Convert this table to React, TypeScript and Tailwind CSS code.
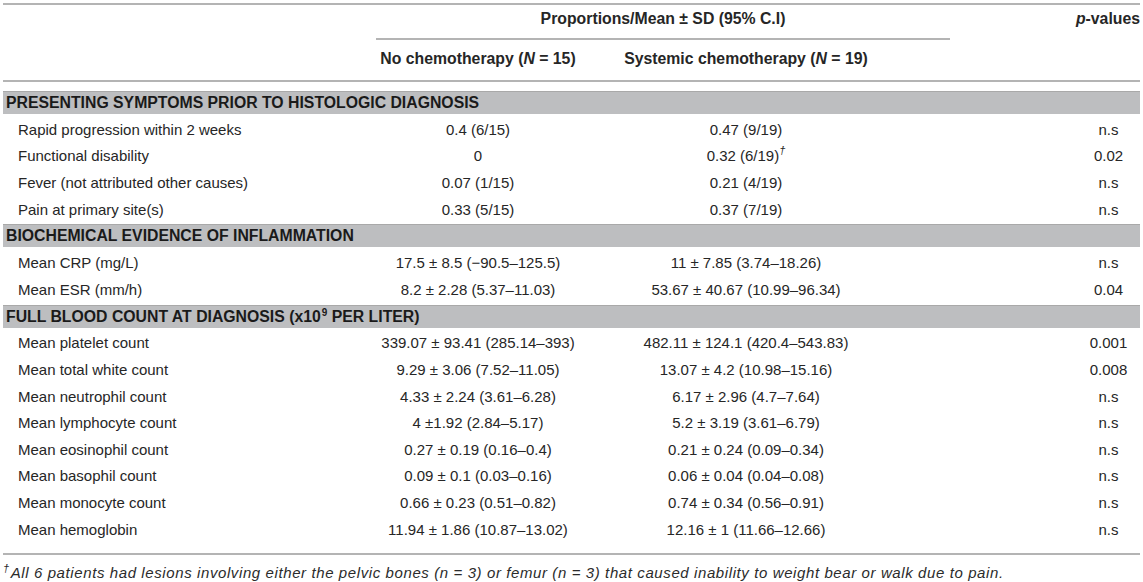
import React from "react";

type Row = { label: string; a: React.ReactNode; b: React.ReactNode; p: string };

const pm = "\u00b1";

const sections: { title: React.ReactNode; rows: Row[] }[] = [
  {
    title: "PRESENTING SYMPTOMS PRIOR TO HISTOLOGIC DIAGNOSIS",
    rows: [
      { label: "Rapid progression within 2 weeks", a: "0.4 (6/15)", b: "0.47 (9/19)", p: "n.s" },
      {
        label: "Functional disability",
        a: "0",
        b: (
          <>
            0.32 (6/19)
            <sup className="italic text-[11px] relative -top-[7px]">†</sup>
          </>
        ),
        p: "0.02",
      },
      { label: "Fever (not attributed other causes)", a: "0.07 (1/15)", b: "0.21 (4/19)", p: "n.s" },
      { label: "Pain at primary site(s)", a: "0.33 (5/15)", b: "0.37 (7/19)", p: "n.s" },
    ],
  },
  {
    title: "BIOCHEMICAL EVIDENCE OF INFLAMMATION",
    rows: [
      { label: "Mean CRP (mg/L)", a: `17.5 ${pm} 8.5 (\u221290.5\u2013125.5)`, b: `11 ${pm} 7.85 (3.74\u201318.26)`, p: "n.s" },
      { label: "Mean ESR (mm/h)", a: `8.2 ${pm} 2.28 (5.37\u201311.03)`, b: `53.67 ${pm} 40.67 (10.99\u201396.34)`, p: "0.04" },
    ],
  },
  {
    title: (
      <>
        FULL BLOOD COUNT AT DIAGNOSIS (x10<sup className="text-[10px] relative -top-[6px] ml-[1px]">9</sup> PER LITER)
      </>
    ),
    rows: [
      { label: "Mean platelet count", a: `339.07 ${pm} 93.41 (285.14\u2013393)`, b: `482.11 ${pm} 124.1 (420.4\u2013543.83)`, p: "0.001" },
      { label: "Mean total white count", a: `9.29 ${pm} 3.06 (7.52\u201311.05)`, b: `13.07 ${pm} 4.2 (10.98\u201315.16)`, p: "0.008" },
      { label: "Mean neutrophil count", a: `4.33 ${pm} 2.24 (3.61\u20136.28)`, b: `6.17 ${pm} 2.96 (4.7\u20137.64)`, p: "n.s" },
      { label: "Mean lymphocyte count", a: `4 ${pm}1.92 (2.84\u20135.17)`, b: `5.2 ${pm} 3.19 (3.61\u20136.79)`, p: "n.s" },
      { label: "Mean eosinophil count", a: `0.27 ${pm} 0.19 (0.16\u20130.4)`, b: `0.21 ${pm} 0.24 (0.09\u20130.34)`, p: "n.s" },
      { label: "Mean basophil count", a: `0.09 ${pm} 0.1 (0.03\u20130.16)`, b: `0.06 ${pm} 0.04 (0.04\u20130.08)`, p: "n.s" },
      { label: "Mean monocyte count", a: `0.66 ${pm} 0.23 (0.51\u20130.82)`, b: `0.74 ${pm} 0.34 (0.56\u20130.91)`, p: "n.s" },
      { label: "Mean hemoglobin", a: `11.94 ${pm} 1.86 (10.87\u201313.02)`, b: `12.16 ${pm} 1 (11.66\u201312.66)`, p: "n.s" },
    ],
  },
];

function DataRow({ r }: { r: Row }) {
  return (
    <div className="flex h-[26.6px] items-center whitespace-nowrap">
      <div className="w-[373px] pl-[15px]">{r.label}</div>
      <div className="w-[204px] text-center">{r.a}</div>
      <div className="w-[332px] text-center">{r.b}</div>
      <div className="w-[165px]" />
      <div className="flex-1 text-center">{r.p}</div>
    </div>
  );
}

export default function App() {
  return (
    <div
      className="w-[1143px] h-[582px] bg-white text-[#262626] text-[15px] leading-none px-[3px] pt-[3px] overflow-hidden"
      style={{ fontFamily: '"Liberation Sans", Arial, sans-serif' }}
    >
      <div className="border-t-2 border-[#b4b4b4]" />
      {/* header row 1 */}
      <div className="flex h-[35px] text-[15.8px] font-bold whitespace-nowrap">
        <div className="w-[373px]" />
        <div className="w-[574px] border-b-2 border-[#b4b4b4] flex items-start pt-[6px] justify-center">
          Proportions/Mean {pm} SD (95% C.I)
        </div>
        <div className="flex-1 flex items-start pt-[6px] justify-end">
          <span className="italic">p</span>-values
        </div>
      </div>
      {/* header row 2 */}
      <div className="flex h-[40px] items-start pt-[11px] font-bold text-[15.8px] whitespace-nowrap">
        <div className="w-[373px]" />
        <div className="w-[204px] text-center">
          No chemotherapy (<span className="italic">N</span> = 15)
        </div>
        <div className="w-[332px] text-center">
          Systemic chemotherapy (<span className="italic">N</span> = 19)
        </div>
        <div className="flex-1" />
      </div>
      <div className="border-t-2 border-[#b4b4b4] mb-[9px]" />
      {sections.map((s, i) => (
        <div key={i}>
          <div className="h-[23px] bg-[#bdbec0] border-t border-[#a9a9a9] flex items-center pl-[3px] font-bold text-[15.8px] text-[#1a1a1a] mb-[2px] whitespace-nowrap">
            <span>{s.title}</span>
          </div>
          {s.rows.map((r, j) => (
            <DataRow key={j} r={r} />
          ))}
          <div className="h-[2px]" />
        </div>
      ))}
      <div className="border-t-2 border-[#b4b4b4] mt-[9px]" />
      <div className="pt-[10px] text-[15px] tracking-[0.6px] italic text-[#2b2b2b] whitespace-nowrap">
        <sup className="text-[11px] relative -top-[6px] mr-[1px]">†</sup>
        All 6 patients had lesions involving either the pelvic bones (n = 3) or femur (n = 3) that caused inability to weight bear or walk due to pain.
      </div>
    </div>
  );
}
